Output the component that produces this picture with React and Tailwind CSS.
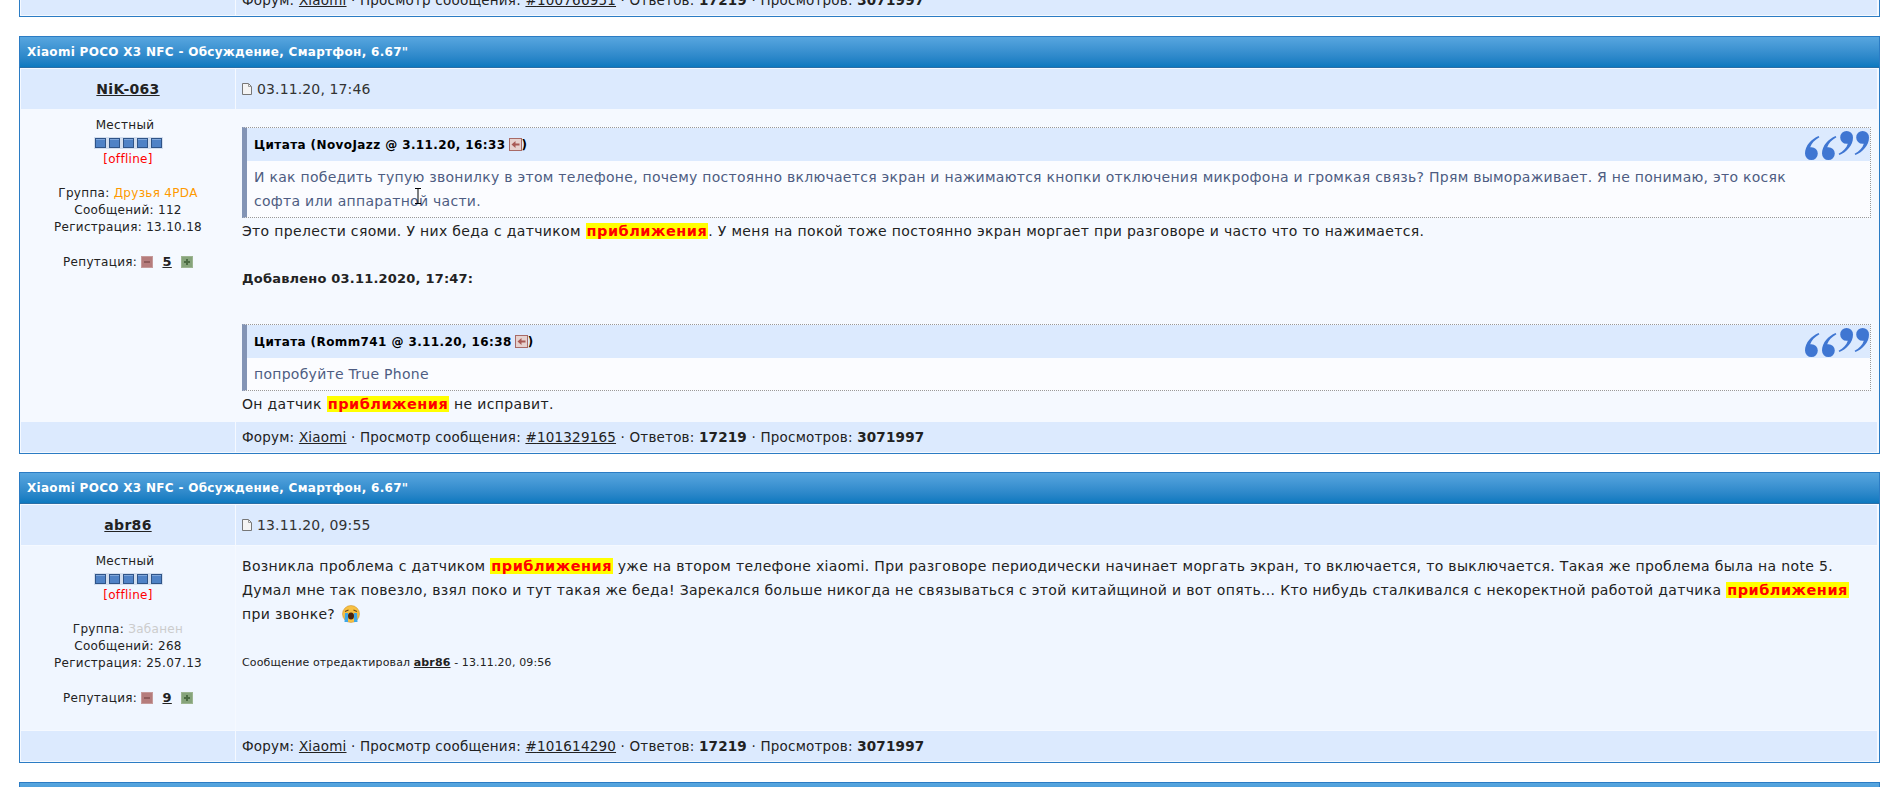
const FONT = "font-['DejaVu_Sans',Verdana,sans-serif]"

function PageIcon() {
  return (
    <svg width="10" height="12" viewBox="0 0 10 12" className="inline-block mr-[5px]">
      <path d="M0.5 0.5H6.5L9.5 3.5V11.5H0.5Z" fill="#f4f4f4" stroke="#777" />
      <path d="M6.5 0.5V3.5H9.5" fill="none" stroke="#999" />
    </svg>
  )
}

function Pips() {
  return (
    <div className="flex justify-center h-[17px] items-center">
      <div className="flex gap-[3px] bg-[#d3deee] p-[1px]">
        {[0, 1, 2, 3, 4].map((i) => (
          <span key={i} className="block w-[11px] h-[10px] bg-[#4f82c6] border border-[#2f5488] shadow-[inset_0_1px_0_#7fa6da]" />
        ))}
      </div>
    </div>
  )
}

function RepButton({ plus }) {
  return (
    <svg width="12" height="12" viewBox="0 0 12 12" className="inline-block align-[-2px]">
      <rect width="12" height="12" fill={plus ? '#9db591' : '#c69a9a'} />
      <rect x="1" y="1" width="10" height="10" fill={plus ? '#86a47b' : '#b57c7c'} />
      <rect x="3" y="5" width="6" height="2" fill={plus ? '#4b6b42' : '#8f5a5a'} />
      {plus && <rect x="5" y="3" width="2" height="6" fill="#4b6b42" />}
    </svg>
  )
}

function BackIcon() {
  return (
    <svg width="13" height="13" viewBox="0 0 13 13" className="inline-block ml-[3px] shrink-0">
      <rect x="0.5" y="0.5" width="12" height="12" fill="#e6d2cf" stroke="#a86a66" />
      <path d="M2.5 6.5L6.5 3V5.5H10.5V7.5H6.5V10Z" fill="#a85a55" />
    </svg>
  )
}

const QUOTE_GLYPH = 'M17 0C8 4 0 12 0 22A8 8 0 1 0 8 14C7.5 14 7 14 6.5 14.1C8 9 12 5 18 1.5Z'

function QuoteMarks() {
  return (
    <svg width="66" height="33" viewBox="0 0 66 33" className="absolute right-0 top-0">
      <g fill="#3f76d2">
        <path d={QUOTE_GLYPH} transform="translate(1 8) scale(0.8)" />
        <path d={QUOTE_GLYPH} transform="translate(18 8) scale(0.8)" />
        <path d={QUOTE_GLYPH} transform="translate(49 27) rotate(180) scale(0.8)" />
        <path d={QUOTE_GLYPH} transform="translate(65 27) rotate(180) scale(0.8)" />
      </g>
    </svg>
  )
}

function CryingEmoji() {
  return (
    <svg width="18" height="18" viewBox="0 0 18 18" className="inline-block align-[-4px] ml-[2px]">
      <circle cx="9" cy="9" r="8.5" fill="#f7c043" stroke="#c98a20" strokeWidth="0.5" />
      <path d="M3 6.5L6.5 5M15 6.5L11.5 5" stroke="#6b4310" strokeWidth="1.2" fill="none" />
      <ellipse cx="9" cy="11" rx="3" ry="3.5" fill="#4a2510" />
      <path d="M3 8H6V17H2.5ZM12 8H15L15.5 17H12Z" fill="#3fa7e6" />
    </svg>
  )
}

function Hl({ children }) {
  return <b className="bg-[#ffff00] text-[#ff0000] px-px text-[14.5px] tracking-[.5px]">{children}</b>
}

function Quote({ title, children, cursor }) {
  return (
    <div className="relative border-y border-r border-dotted border-[#999] border-l-[5px] [border-left-style:solid] border-l-[#8394b5] bg-[#fbfcff]">
      <div className="relative h-[33px] flex items-center bg-[#dceafe] pl-[7px] text-[12px] tracking-[.4px] font-bold text-black">
        <span>{title}</span>
        <BackIcon />
        <span>)</span>
        <QuoteMarks />
      </div>
      <div className="px-[7px] py-[4px] text-[#4e5c82] leading-[24px] tracking-[.27px]">{children}</div>
      {cursor && (
        <svg width="7" height="16" viewBox="0 0 7 16" className="absolute left-[168px] top-[60px]">
          <path d="M0 0.5H6M3 0.5V15.5M0 15.5H6" stroke="#000" fill="none" />
        </svg>
      )}
    </div>
  )
}

function FooterText({ id }) {
  return (
    <span className="text-[13.5px] tracking-[.2px]">
      Форум: <u>Xiaomi</u> · Просмотр сообщения: <u>#{id}</u> · Ответов: <b>17219</b> · Просмотров: <b>3071997</b>
    </span>
  )
}

function Profile({ group, groupColor, posts, reg, rep }) {
  return (
    <div className="pt-[7px] text-center text-[12px] tracking-[.3px] leading-[17px] text-[#222]">
      <div className="pr-[6px]">Местный</div>
      <Pips />
      <div className="text-[#ff0000]">[offline]</div>
      <div className="h-[17px]" />
      <div>
        Группа: <span className={groupColor}>{group}</span>
      </div>
      <div>Сообщений: {posts}</div>
      <div>Регистрация: {reg}</div>
      <div className="h-[17px]" />
      <div>
        Репутация: <RepButton /> <b className="underline text-[13px] mx-[5px]">{rep}</b> <RepButton plus />
      </div>
    </div>
  )
}

function Post({ author, date, postId, profile, postBg, gap, children }) {
  return (
    <div className={`${gap} border border-[#2b7cc4]`}>
      <div className="h-[32px] -mt-px -mx-px flex items-center px-[7px] bg-gradient-to-b from-[#57a6df] to-[#0a79bf] border border-[#2b7cc4] border-b-[#2a6ea6] text-[12px] tracking-[.3px] font-bold text-white">
        Xiaomi POCO X3 NFC - Обсуждение, Смартфон, 6.67"
      </div>
      <div className="grid grid-cols-[214px_1fr] gap-px pl-px pr-[2px] pb-px pt-[1px] bg-[#f5f9ff]">
        <div className="h-[40px] flex items-center justify-center bg-[#dceafe] font-bold underline text-[14px] tracking-[.3px] text-[#222]">{author}</div>
        <div className="h-[40px] flex items-center pl-[6px] bg-[#dceafe] text-[14px] tracking-[.13px] text-[#333]">
          <PageIcon />
          {date}
        </div>
        <div className={postBg}>{profile}</div>
        <div className={`${postBg} px-[6px] text-[14px] tracking-[.33px] text-[#222] leading-[24px]`}>{children}</div>
        <div className="h-[30px] bg-[#dceafe]" />
        <div className="h-[30px] flex items-center pl-[6px] bg-[#dceafe] text-[#222]">
          <FooterText id={postId} />
        </div>
      </div>
    </div>
  )
}

export default function App() {
  return (
    <div className={`h-[787px] overflow-hidden bg-white pl-[19px] pr-[13px] ${FONT}`}>
      <div className="-mt-[16px] border border-[#2b7cc4]">
        <div className="grid grid-cols-[214px_1fr] gap-px pl-px pr-[2px] pb-px bg-[#f5f9ff]">
          <div className="h-[30px] bg-[#dceafe]" />
          <div className="h-[30px] flex items-center pl-[6px] bg-[#dceafe] text-[#222]">
            <FooterText id="100766951" />
          </div>
        </div>
      </div>

      <Post
        gap="mt-[19px]"
        author="NiK-063"
        date="03.11.20, 17:46"
        postId="101329165"
        postBg="bg-[#f5f9ff]"
        profile={<Profile group="Друзья 4PDA" groupColor="text-[#ff9900]" posts="112" reg="13.10.18" rep="5" />}
      >
        <div className="pt-[17px]">
          <Quote title="Цитата (NovoJazz @ 3.11.20, 16:33" cursor>
            И как победить тупую звонилку в этом телефоне, почему постоянно включается экран и нажимаются кнопки отключения микрофона и громкая связь? Прям вымораживает. Я не понимаю, это косяк
            <br />
            софта или аппаратной части.
          </Quote>
          <div className="pt-[1px]">
            Это прелести сяоми. У них беда с датчиком <Hl>приближения</Hl>. У меня на покой тоже постоянно экран моргает при разговоре и часто что то нажимается.
          </div>
          <div className="mt-[24px] font-bold text-[13px] tracking-[.2px]">Добавлено 03.11.2020, 17:47:</div>
          <div className="pt-[33px]">
            <Quote title="Цитата (Romm741 @ 3.11.20, 16:38">попробуйте True Phone</Quote>
          </div>
          <div className="pt-[1px] pb-[5px]">
            Он датчик <Hl>приближения</Hl> не исправит.
          </div>
        </div>
      </Post>

      <Post
        gap="mt-[18px]"
        author="abr86"
        date="13.11.20, 09:55"
        postId="101614290"
        postBg="bg-[#f0f6ff]"
        profile={<Profile group="Забанен" groupColor="text-[#cccccc]" posts="268" reg="25.07.13" rep="9" />}
      >
        <div className="pt-[8px] h-[184px]">
          Возникла проблема с датчиком <Hl>приближения</Hl> уже на втором телефоне xiaomi. При разговоре периодически начинает моргать экран, то включается, то выключается. Такая же проблема была на note 5.
          <br />
          Думал мне так повезло, взял поко и тут такая же беда! Зарекался больше никогда не связываться с этой китайщиной и вот опять... Кто нибудь сталкивался с некоректной работой датчика <Hl>приближения</Hl>
          <br />
          при звонке? <CryingEmoji />
          <div className="mt-[25px] text-[11px] tracking-[.13px]">
            Сообщение отредактировал <b className="underline">abr86</b> - 13.11.20, 09:56
          </div>
        </div>
      </Post>

      <div className="mt-[19px] h-[32px] bg-gradient-to-b from-[#57a6df] to-[#0a79bf] border border-[#2b7cc4]" />
    </div>
  )
}
